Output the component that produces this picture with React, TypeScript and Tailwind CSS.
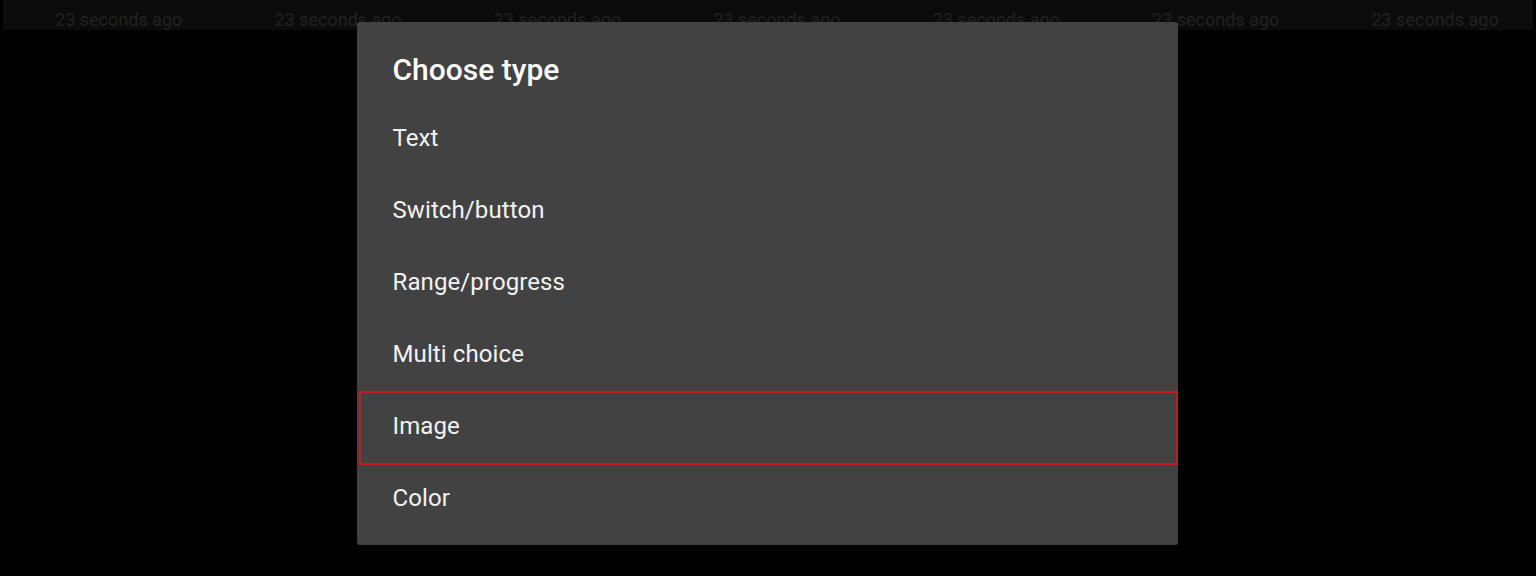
import React from "react";

const items = ["Text", "Switch/button", "Range/progress", "Multi choice"];

export default function App() {
  return (
    <div className="w-[1536px] h-[576px] bg-black overflow-hidden flex flex-col" style={{ fontFamily: "Roboto, 'Liberation Sans', sans-serif" }}>
      <div className="h-[30px] ml-[3px] mr-[3px] bg-[#0b0b0b] flex pl-[6px] overflow-hidden shrink-0">
        {Array.from({ length: 7 }).map((_, i) => (
          <div key={i} className="w-[219.4px] shrink-0 flex justify-center pt-[9px] text-[18px] leading-[22px] text-[#212121]">
            23 seconds ago
          </div>
        ))}
      </div>
      <div className="flex justify-center -mt-[8px]">
        <div className="w-[821px] h-[523px] bg-[#424242] rounded-[3px] flex flex-col ml-[-2px]">
          <div className="h-[80px] pl-[36px] pt-[30px] text-[30px] leading-[36px] font-medium text-white">Choose type</div>
          {items.map((it) => (
            <div key={it} className="h-[72px] flex items-center pl-[36px] text-[24px] tracking-[0.1px] text-[#f2f2f2]">
              {it}
            </div>
          ))}
          <div className="mt-[1px] h-[74px] pb-[4px] flex items-center pl-[32px] ml-[2px] border-2 border-[#c8191c] text-[24px] tracking-[0.1px] text-[#f2f2f2]">
            Image
          </div>
          <div className="h-[66px] flex items-center pl-[36px] text-[24px] tracking-[0.1px] text-[#f2f2f2]">Color</div>
        </div>
      </div>
    </div>
  );
}
